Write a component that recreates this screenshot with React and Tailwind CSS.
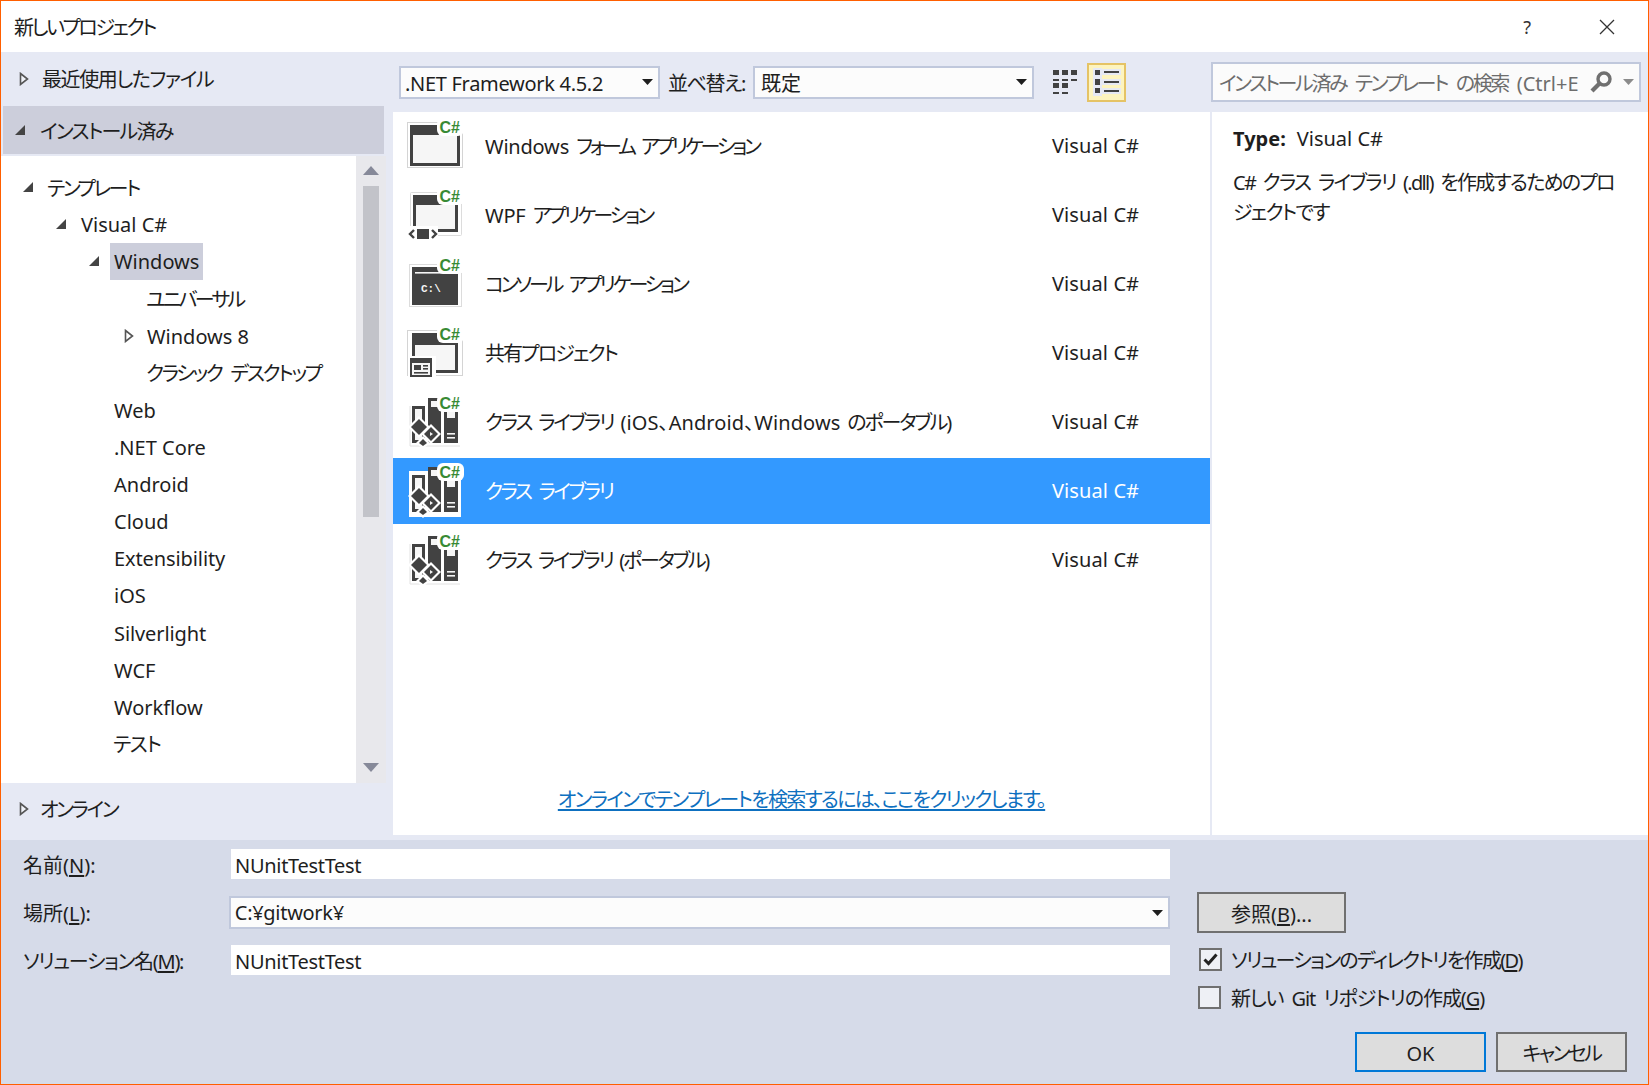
import React from "react";

const Caret = ({ className = "" }) => (
  <svg width="11" height="6" viewBox="0 0 11 6" className={className}><path d="M0 0H11L5.5 6Z" fill="#1e1e1e" /></svg>
);
const Solid = () => (
  <svg width="12" height="12" viewBox="0 0 12 12" className="block"><path d="M11 1V11H1Z" fill="#444" /></svg>
);
const Hollow = () => (
  <svg width="10" height="14" viewBox="0 0 10 14" className="block"><path d="M1.5 1.5L8.5 7L1.5 12.5Z" fill="#fff" fillOpacity="0.4" stroke="#555" strokeWidth="1.6" /></svg>
);

const CSharp = ({ halo }) => (
  <>
    <rect x="30" y="-2" width="27" height="18" rx="6" fill={halo} />
    <text x="32.5" y="13" fontSize="16" fontWeight="700" fill="#388a34" fontFamily="'Liberation Sans',sans-serif">C#</text>
  </>
);

const IconShell = ({ children }) => (
  <svg width="60" height="56" viewBox="0 -2 60 56" className="block shrink-0 overflow-visible">{children}</svg>
);

const FormIcon = ({ halo }) => (
  <IconShell>
    <rect x="0.5" y="2.5" width="55" height="45" fill="#fff" stroke="#d4d4d4" />
    <rect x="3" y="5" width="50" height="41" fill="#424242" />
    <rect x="6" y="15" width="44" height="28" fill="#f6f6f6" />
    <CSharp halo={halo} />
  </IconShell>
);
const WpfIcon = ({ halo }) => (
  <IconShell>
    <rect x="3.5" y="3.5" width="51" height="43" rx="1" fill="#fff" stroke="#dcdcdc" />
    <rect x="6" y="6" width="45" height="37" fill="#424242" />
    <rect x="9" y="16" width="39" height="24" fill="#f6f6f6" />
    <rect x="0" y="37" width="31" height="15" fill="#fff" />
    <path d="M7 41L3 45L7 49M25 41L29 45L25 49" fill="none" stroke="#424242" strokeWidth="2.4" />
    <rect x="10" y="40" width="12" height="10" fill="#424242" />
    <CSharp halo={halo} />
  </IconShell>
);
const ConsoleIcon = ({ halo }) => (
  <IconShell>
    <rect x="2.5" y="6.5" width="52" height="42" fill="#fff" stroke="#dcdcdc" />
    <rect x="5" y="9" width="46" height="38" fill="#424242" />
    <rect x="8" y="14" width="28" height="1.6" fill="#f6f6f6" />
    <text x="14" y="34" fontSize="11" fontWeight="700" fill="#f6f6f6" fontFamily="'Liberation Mono',monospace">C:\</text>
    <CSharp halo={halo} />
  </IconShell>
);
const SharedIcon = ({ halo }) => (
  <IconShell>
    <rect x="0.5" y="3.5" width="55" height="45" fill="#fff" stroke="#d4d4d4" />
    <rect x="5" y="6" width="46" height="40" fill="#424242" />
    <rect x="8" y="18" width="40" height="25" fill="#f6f6f6" />
    <rect x="1" y="29" width="28" height="23" fill="#fff" />
    <rect x="3" y="31" width="22" height="19" fill="#424242" />
    <rect x="5" y="36" width="18" height="12" fill="#f6f6f6" />
    <rect x="7" y="38" width="7" height="5" fill="#424242" />
    <rect x="16" y="38" width="5" height="1.6" fill="#424242" />
    <rect x="16" y="41" width="5" height="1.6" fill="#424242" />
    <rect x="7" y="45" width="14" height="1.6" fill="#424242" />
    <CSharp halo={halo} />
  </IconShell>
);
const LibIcon = ({ halo, sel }) => (
  <IconShell>
    {sel
      ? <rect x="2" y="6" width="52" height="46" fill="#fff" />
      : <path d="M3 10V50H53" fill="none" stroke="#e2e2e2" />}
    <rect x="5" y="10" width="13" height="37" fill="#424242" />
    <rect x="8" y="13" width="7" height="15" fill="#f6f6f6" />
    <rect x="8" y="38" width="7" height="6" fill="#f6f6f6" />
    <rect x="21" y="2" width="13" height="45" fill="#424242" />
    <rect x="24" y="5" width="10" height="6" fill="#f6f6f6" />
    <rect x="37" y="14" width="14" height="33" fill="#424242" />
    <rect x="40" y="14" width="8" height="8" fill="#f6f6f6" />
    <rect x="40" y="37" width="8" height="1.6" fill="#f6f6f6" />
    <rect x="40" y="41" width="8" height="1.6" fill="#f6f6f6" />
    <path d="M12 20L23 31L12 42L1 31Z" fill="#fff" />
    <path d="M24 28L34 38L24 48L14 38Z" fill="#fff" />
    <path d="M16 40L23 47L16 53L9 47Z" fill="#fff" />
    <path d="M12 23L20 31L12 39L4 31Z" fill="#424242" />
    <path d="M24 31L31 38L24 45L17 38Z" fill="#424242" />
    <path d="M23 36L26 38L23 40Z" fill="#f6f6f6" />
    <path d="M16 43L20 47L16 50L12 47Z" fill="#424242" />
    <CSharp halo={halo} />
  </IconShell>
);

const GridIcon = () => (
  <svg width="26" height="26" viewBox="0 0 26 26" className="block">
    <g fill="#424242">
      <rect x="1" y="1" width="6" height="5" /><rect x="10" y="1" width="6" height="5" /><rect x="19" y="1" width="6" height="5" />
      <rect x="1" y="10" width="6" height="2" /><rect x="10" y="10" width="6" height="2" /><rect x="19" y="10" width="6" height="2" />
      <rect x="1" y="14" width="6" height="5" /><rect x="10" y="14" width="6" height="5" />
      <rect x="1" y="23" width="6" height="2" /><rect x="10" y="23" width="6" height="2" />
    </g>
  </svg>
);
const ListIcon = () => (
  <svg width="28" height="28" viewBox="0 0 28 28" className="block">
    <rect x="0" y="0" width="9" height="28" fill="#e6e9f4" />
    <rect x="9" y="1" width="19" height="6" fill="#e6e9f4" />
    <rect x="9" y="11" width="19" height="6" fill="#e6e9f4" />
    <rect x="9" y="20" width="19" height="6" fill="#e6e9f4" />
    <g fill="#424242">
      <rect x="2" y="2" width="5" height="5" /><rect x="2" y="11" width="5" height="6" /><rect x="2" y="20" width="5" height="5" />
      <rect x="11" y="3" width="15" height="2" /><rect x="11" y="13" width="15" height="2" /><rect x="11" y="22" width="15" height="2" />
    </g>
  </svg>
);
const SearchIcon = () => (
  <svg width="24" height="24" viewBox="0 0 24 24" className="block shrink-0">
    <circle cx="15" cy="9" r="6" fill="none" stroke="#707070" strokeWidth="3.4" />
    <path d="M10.5 13.5L3 21" stroke="#707070" strokeWidth="4.2" />
  </svg>
);

const L = ({ children }) => <span className="tracking-[-0.2px]">{children}</span>;
const L2 = ({ children }) => <span className="tracking-[0.1px]">{children}</span>;

const tree = [
  { t: "テンプレート", d: 0, a: "s", k: "tracking-[-2.4px] pt-[2px]" },
  { t: "Visual C#", d: 1, a: "s", k: "ml-[1px] pt-[1px]" },
  { t: "Windows", d: 2, a: "s", sel: true, k: "pt-[1px]" },
  { t: "ユニバーサル", d: 3, k: "tracking-[-2.7px] pt-[2px]" },
  { t: "Windows 8", d: 3, a: "h", k: "ml-[1px] pt-[1px]" },
  { t: "クラシック デスクトップ", d: 3, k: "tracking-[-2.3px] [word-spacing:6px] pt-[2px]" },
  { t: "Web", d: 2, k: "ml-[1px] pt-[1px]" }, { t: ".NET Core", d: 2, k: "ml-[1px] pt-[1px]" }, { t: "Android", d: 2, k: "ml-[1px] pt-[1px]" }, { t: "Cloud", d: 2, k: "ml-[1px] pt-[1px]" },
  { t: "Extensibility", d: 2, k: "ml-[1px] tracking-[-0.1px] pt-[1px]" }, { t: "iOS", d: 2, k: "ml-[1px] pt-[1px]" }, { t: "Silverlight", d: 2, k: "ml-[1px] tracking-[-0.1px] pt-[1px]" }, { t: "WCF", d: 2, k: "ml-[1px] pt-[1px]" },
  { t: "Workflow", d: 2, k: "ml-[1px] pt-[1px]" }, { t: "テスト", d: 2, k: "tracking-[-1.3px] pt-[1px]" },
];
const indent = ["pl-[46px]", "pl-[79px]", "pl-[112px]", "pl-[145px]"];

const rows = [
  { id: 1, t: <><L>Windows</L> フォーム アプリケーション</>, I: FormIcon, k: "tracking-[-3.1px] [word-spacing:5px]" },
  { id: 2, t: <><L>WPF</L> アプリケーション</>, I: WpfIcon, k: "tracking-[-2.9px] [word-spacing:5px]" },
  { id: 3, t: "コンソール アプリケーション", I: ConsoleIcon, k: "tracking-[-3.05px] [word-spacing:5px]" },
  { id: 4, t: "共有プロジェクト", I: SharedIcon, k: "tracking-[-1.9px]" },
  { id: 5, t: <>クラス ライブラリ <L2>(iOS、Android、Windows</L2> のポータブル)</>, I: LibIcon, k: "tracking-[-2.2px] [word-spacing:4px]" },
  { id: 6, t: "クラス ライブラリ", I: LibIcon, sel: true, k: "tracking-[-2.4px] [word-spacing:5px]" },
  { id: 7, t: "クラス ライブラリ (ポータブル)", I: LibIcon, k: "tracking-[-2.3px] [word-spacing:4px]" },
];

const Field = ({ children }) => (
  <div className="h-[30px] w-[939px] bg-white flex items-center pl-[4px]"><span className="pt-[4px] tracking-[-0.3px]">{children}</span></div>
);
const Key = ({ children }) => <span className="underline underline-offset-2">{children}</span>;

export default function App() {
  return (
    <div className="w-[1649px] h-[1085px] border border-[#ff5f00] flex flex-col overflow-hidden bg-white text-[#1e1e1e] text-[20px] leading-none [font-family:'Noto_Sans','Noto_Sans_CJK_JP',sans-serif] [font-feature-settings:'palt']">
      <div className="h-[51px] shrink-0 flex items-center pl-[13px] pr-[33px] justify-between">
        <span className="pt-[2px] tracking-[-2.45px]">新しいプロジェクト</span>
        <div className="flex items-center gap-[68px]">
          <span className="text-[18px] text-[#333]">?</span>
          <svg width="16" height="16" viewBox="0 0 16 16" className="block"><path d="M1 1L15 15M15 1L1 15" stroke="#333" strokeWidth="1.3" /></svg>
        </div>
      </div>

      <div className="h-[788px] shrink-0 bg-[#e6e9f4] flex">
        <div className="w-[385px] shrink-0 flex flex-col">
          <div className="h-[54px] flex items-center pl-[18px] gap-[13px]"><Hollow /><span className="pt-[2px] tracking-[-1.4px]">最近使用したファイル</span></div>
          <div className="h-[48px] ml-[2px] w-[381px] bg-[#ccceDB] flex items-center pl-[11px] gap-[14px]"><Solid /><span className="pt-[4px] tracking-[-1.7px]">インストール済み</span></div>
          <div className="h-[627px] mt-[2px] flex">
            <div className="w-[355px] bg-white pt-[13px] flex flex-col">
              {tree.map((n) => (
                <div key={n.t} className={`h-[37.13px] shrink-0 flex items-center relative ${indent[n.d]}`}>
                  {n.a === "s" && <span className="absolute top-[12px] -ml-[25px]"><Solid /></span>}
                  {n.a === "h" && <span className="absolute top-[11px] -ml-[22px]"><Hollow /></span>}
                  <span className={`${n.k || ""} ${n.sel ? "bg-[#ccceDB] h-[37px] flex items-center -ml-[3px] px-[4px]" : ""}`}>{n.t}</span>
                </div>
              ))}
            </div>
            <div className="w-[30px] bg-[#e8e8ec] flex flex-col items-center">
              <svg width="16" height="9" viewBox="0 0 16 9" className="block mt-[10px] shrink-0"><path d="M8 0L16 9H0Z" fill="#868999" /></svg>
              <div className="w-[16px] h-[331px] bg-[#c2c3c9] mt-[11px] shrink-0" />
              <div className="flex-1" />
              <svg width="16" height="9" viewBox="0 0 16 9" className="block mb-[11px] shrink-0"><path d="M0 0H16L8 9Z" fill="#868999" /></svg>
            </div>
          </div>
          <div className="h-[57px] flex items-center pl-[18px] pb-[5px] gap-[11px]"><Hollow /><span className="pt-[2px] tracking-[-2.3px]">オンライン</span></div>
        </div>

        <div className="flex-1 flex flex-col pl-[7px] min-w-0">
          <div className="h-[60px] shrink-0 flex items-center">
            <div className="ml-[6px] w-[261px] h-[33px] border-2 border-[#c0c8dc] bg-[#fcfcfc] flex items-center justify-between pl-[4px] pr-[5px]"><span className="pt-[4px] tracking-[-0.3px]">.NET Framework 4.5.2</span><Caret /></div>
            <span className="ml-[8px] w-[85px] pt-[4px] tracking-[-1.4px]">並べ替え:</span>
            <div className="w-[281px] h-[33px] border-2 border-[#c0c8dc] bg-[#fcfcfc] flex items-center justify-between pl-[6px] pr-[5px]"><span className="pt-[4px]">既定</span><Caret /></div>
            <div className="ml-[18px]"><GridIcon /></div>
            <div className="ml-[9px] w-[39px] h-[39px] border-2 border-[#e5c365] bg-[#fdf4bf] flex items-center justify-center shrink-0"><ListIcon /></div>
            <div className="ml-[85px] w-[430px] h-[40px] shrink-0 border-2 border-[#c0c8dc] bg-[#fbfbfb] flex items-center pl-[6px] pr-[5px] text-[#6d6d6d]">
              <span className="w-[370px] shrink-0 pt-[4px] whitespace-nowrap tracking-[-2.4px] [word-spacing:6px]">インストール済み テンプレート の検索 <span className="tracking-[0px]">(Ctrl+E</span></span>
              <SearchIcon />
              <Caret className="ml-[10px] opacity-50 shrink-0" />
            </div>
          </div>
          <div className="h-[723px] shrink-0 flex">
            <div className="w-[817px] shrink-0 bg-white flex flex-col pt-[1px] gap-[3px]">
              {rows.map((r) => (
                <div key={r.id} className={`h-[66px] shrink-0 flex items-center pl-[14px] ${r.sel ? "bg-[#3399ff] text-white" : ""}`}>
                  <r.I halo="#fff" sel={r.sel} />
                  <span className={`ml-[18px] w-[567px] whitespace-nowrap pt-[2px] ${r.k}`}>{r.t}</span>
                  <span className="tracking-[0.1px]">Visual C#</span>
                </div>
              ))}
              <div className="mt-auto mb-[25px] text-center">
                <span className="text-[#0e70c0] underline underline-offset-2 tracking-[-1.7px]">オンラインでテンプレートを検索するには、ここをクリックします。</span>
              </div>
            </div>
            <div className="flex-1 ml-[2px] bg-white pl-[21px] pr-[10px] pt-[16px]">
              <div className="h-[22px] flex items-center"><span className="font-bold mr-[11px]">Type:</span><span>Visual C#</span></div>
              <div className="mt-[18px] leading-[30px] tracking-[-1.7px] [word-spacing:4px] whitespace-nowrap">C# クラス ライブラリ (.dll) を作成するためのプロ<br />ジェクトです</div>
            </div>
          </div>
          <div className="h-[5px]" />
        </div>
      </div>

      <div className="flex-1 bg-[#d6dbe9] flex">
        <div className="w-[1169px] shrink-0 pt-[9px] pl-[22px] flex flex-col">
          <div className="flex items-center"><span className="w-[208px] pt-[4px]">名前(<Key>N</Key>):</span><Field>NUnitTestTest</Field></div>
          <div className="flex items-center mt-[17px]">
            <span className="w-[206px] pt-[2px]">場所(<Key>L</Key>):</span>
            <div className="h-[33px] w-[942px] border-2 border-[#c0c8dc] bg-[#fcfcfc] flex items-center justify-between pl-[4px] pr-[5px]"><span className="tracking-[-0.3px]">C:¥gitwork¥</span><Caret /></div>
          </div>
          <div className="flex items-center mt-[16px]"><span className="w-[208px] pt-[4px] tracking-[-1.3px] whitespace-nowrap">ソリューション名(<Key>M</Key>):</span><Field>NUnitTestTest</Field></div>
        </div>
        <div className="flex-1 pl-[27px] pt-[52px] pr-[21px] flex flex-col">
          <div className="w-[149px] h-[41px] border-2 border-[#707070] bg-[#dddddd] flex items-center justify-center"><span className="pt-[4px]">参照(<Key>B</Key>)...</span></div>
          <div className="flex items-center mt-[15px] ml-[2px]">
            <div className="w-[23px] h-[23px] border-2 border-[#707070] bg-[#eef0f5] flex items-center justify-center">
              <svg width="15" height="13" viewBox="0 0 15 13" className="block"><path d="M1.5 6.5L5.5 10.5L13.5 1.5" fill="none" stroke="#222" strokeWidth="3" /></svg>
            </div>
            <span className="ml-[9px] pt-[2px] tracking-[-1.7px]">ソリューションのディレクトリを作成(<Key>D</Key>)</span>
          </div>
          <div className="flex items-center mt-[15px] ml-[1px]">
            <div className="w-[23px] h-[23px] border-2 border-[#707070] bg-[#eef0f5]" />
            <span className="ml-[10px] pt-[2px] tracking-[-1.1px] [word-spacing:4px]">新しい Git リポジトリの作成(<Key>G</Key>)</span>
          </div>
          <div className="flex justify-end gap-[10px] mt-[23px]">
            <div className="w-[131px] h-[40px] border-2 border-[#0078d7] bg-[#dddddd] flex items-center justify-center"><span className="pt-[4px]">OK</span></div>
            <div className="w-[131px] h-[40px] border-2 border-[#707070] bg-[#dddddd] flex items-center justify-center"><span className="pt-[4px] tracking-[-2.5px]">キャンセル</span></div>
          </div>
        </div>
      </div>
    </div>
  );
}
